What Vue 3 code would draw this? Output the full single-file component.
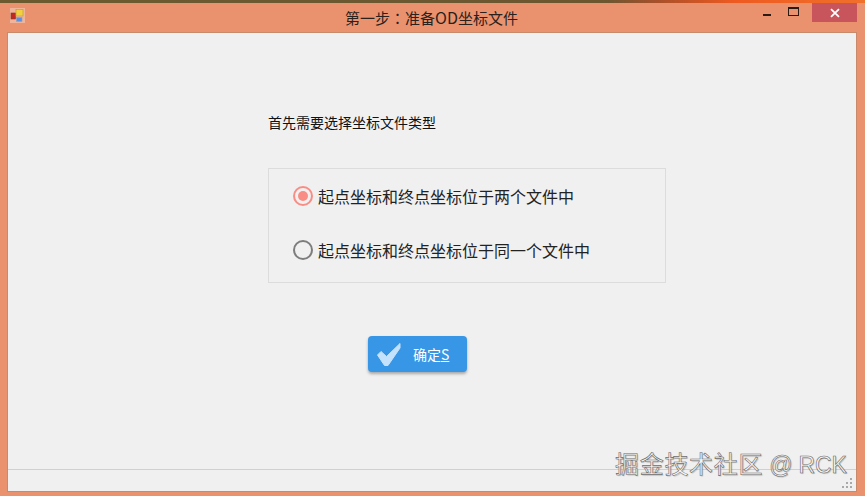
<script setup>
const options = [
  { label: '起点坐标和终点坐标位于两个文件中', checked: true },
  { label: '起点坐标和终点坐标位于同一个文件中', checked: false }
]
</script>

<template>
  <div class="window">
    <div class="topstrip"></div>
    <div class="titlebar">
      <svg class="app-icon" width="16" height="16" viewBox="0 0 16 16">
        <rect x="0" y="0" width="15" height="15" fill="#efb49a" />
        <rect x="1" y="5" width="4.5" height="6" fill="#c02a20" stroke="#8a3a2a" stroke-width="0.6" />
        <rect x="6" y="1.5" width="7" height="6.5" fill="#f3d040" stroke="#b89a40" stroke-width="0.6" />
        <rect x="6.5" y="9.5" width="5.5" height="4" fill="#5f8fe0" stroke="#8fa0c0" stroke-width="0.6" />
      </svg>
      <div class="title">第一步<span class="colon">：</span>准备<span class="latin">OD</span>坐标文件</div>
      <div class="controls">
        <div class="ctl"><span class="min"></span></div>
        <div class="ctl"><span class="max"></span></div>
        <div class="close">
          <svg width="10" height="10" viewBox="0 0 10 10">
            <path d="M1 1.2 L9 8.8 M9 1.2 L1 8.8" stroke="#fff" stroke-width="1.8" fill="none" />
          </svg>
        </div>
      </div>
    </div>
    <div class="client">
      <div class="content">
        <div class="prompt">首先需要选择坐标文件类型</div>
        <div class="group">
          <div v-for="opt in options" :key="opt.label" class="radio-row">
            <span class="radio" :class="{ on: opt.checked }"></span>
            <span class="radio-label">{{ opt.label }}</span>
          </div>
        </div>
        <button class="ok">
          <svg class="check" width="26" height="26" viewBox="0 0 26 26">
            <path d="M1.5 14 L5 10.5 L10.5 15.5 L24 2.5 L24 7 L12 24.5 L8.5 24.5 Z" fill="#c4e2fb" stroke="#c4e2fb" stroke-width="1" stroke-linejoin="round" />
          </svg>
          <span class="ok-text">确定<u>S</u></span>
        </button>
      </div>
      <div class="status"></div>
      <svg class="grip" width="12" height="12" viewBox="0 0 12 12">
        <g fill="#a9a9a9">
          <rect x="9" y="1" width="2" height="2" />
          <rect x="5" y="5" width="2" height="2" />
          <rect x="9" y="5" width="2" height="2" />
          <rect x="1" y="9" width="2" height="2" />
          <rect x="5" y="9" width="2" height="2" />
          <rect x="9" y="9" width="2" height="2" />
        </g>
      </svg>
    </div>
    <div class="watermark">掘金技术社区 <span class="wm-latin">@ RCK</span></div>
  </div>
</template>

<style>
html,
body {
  margin: 0;
  overflow: hidden;
}
</style>

<style scoped>
.window {
  position: relative;
  box-sizing: border-box;
  width: 865px;
  height: 496px;
  display: flex;
  flex-direction: column;
  padding: 0 8px 4px 7px;
  background: #ea926d;
  font-family: "Noto Sans CJK SC", "Liberation Sans", sans-serif;
  overflow: hidden;
}

.topstrip {
  flex: none;
  height: 3px;
  margin: 0 -8px 0 -7px;
  background: linear-gradient(90deg, #6b5a30 0%, #6b5630 70%, #a8502a 76%, #ef5a20 85%, #f0702a 100%);
}

.titlebar {
  position: relative;
  height: 29px;
  flex: none;
  display: flex;
  align-items: flex-start;
}

.app-icon {
  margin: 5px 0 0 3px;
}

.title {
  position: absolute;
  left: 338px;
  top: 4px;
  font-size: 15px;
  line-height: 20px;
  color: #2a211c;
  white-space: nowrap;
}

.colon {
  font-family: "Noto Sans CJK TC", sans-serif;
}

.latin {
  font-size: 16px;
}

.controls {
  margin-left: auto;
  display: flex;
  align-items: flex-start;
}

.ctl {
  width: 27px;
  height: 20px;
  position: relative;
}

.min {
  position: absolute;
  left: 5px;
  top: 11px;
  width: 8px;
  height: 2px;
  background: #2a1c14;
}

.max {
  position: absolute;
  left: 3px;
  top: 4px;
  width: 9px;
  height: 6px;
  border: 1px solid #2a1c14;
  border-top-width: 2px;
}

.close {
  width: 45px;
  height: 19px;
  background: #c9555c;
  display: flex;
  align-items: center;
  justify-content: center;
}

.client {
  position: relative;
  flex: 1;
  display: flex;
  flex-direction: column;
  background: #f0f0f0;
  border: 1px solid #c98a6c;
}

.content {
  flex: 1;
  padding: 79px 0 0 260px;
}

.prompt {
  font-size: 14px;
  line-height: 20px;
  color: #111;
}

.group {
  box-sizing: border-box;
  width: 398px;
  height: 115px;
  margin-top: 36px;
  padding: 1px 0 0 24px;
  border: 1px solid #dcdcdc;
  display: flex;
  flex-direction: column;
  gap: 22px;
  justify-content: flex-start;
}

.radio-row {
  height: 32px;
  margin-top: 10px;
  display: flex;
  align-items: center;
  gap: 5px;
}

.radio-row + .radio-row {
  margin-top: 0;
}

.radio {
  box-sizing: border-box;
  width: 20px;
  height: 20px;
  border-radius: 50%;
  border: 2px solid #7d7d7d;
  display: flex;
  align-items: center;
  justify-content: center;
}

.radio.on {
  border-color: #f98d85;
}

.radio.on::after {
  content: "";
  width: 10px;
  height: 10px;
  border-radius: 50%;
  background: #f98d85;
}

.radio-label {
  font-size: 16px;
  line-height: 22px;
  color: #222;
}

.ok {
  box-sizing: border-box;
  width: 99px;
  height: 36px;
  margin: 53px 0 0 100px;
  padding: 0 0 0 8px;
  display: flex;
  align-items: center;
  border: none;
  border-radius: 4px;
  background: #3896e6;
  box-shadow: 0 2px 3px rgba(0, 0, 0, 0.3);
  font-family: inherit;
}

.check {
  flex: none;
}

.ok-text {
  margin-left: 11px;
  font-size: 14px;
  line-height: 20px;
  color: #fff;
}

.status {
  flex: none;
  height: 21px;
  border-top: 1px solid #d0d0d0;
}

.grip {
  position: absolute;
  right: 3px;
  bottom: 2px;
}

.watermark {
  position: absolute;
  left: 615px;
  top: 446px;
  font-size: 24px;
  line-height: 34px;
  letter-spacing: 0.7px;
  white-space: nowrap;
  color: #f6f6f6;
  -webkit-text-stroke: 0.6px #6a6a6a;
  text-shadow: 1px 1px 1px rgba(0, 0, 0, 0.2);
  font-family: "Noto Sans CJK SC", "Liberation Sans", sans-serif;
}

.wm-latin {
  font-family: "Liberation Sans", sans-serif;
  font-size: 23px;
  letter-spacing: -0.2px;
}
</style>
